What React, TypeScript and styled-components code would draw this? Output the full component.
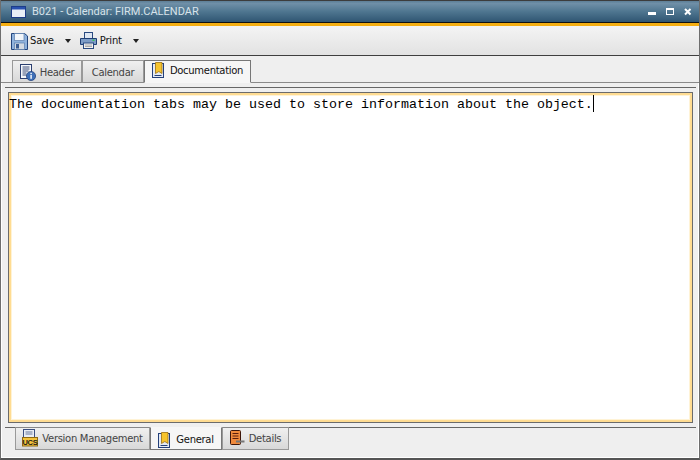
import React from "react";
import styled, { createGlobalStyle } from "styled-components";

const UI_FONT = `"DejaVu Sans", Verdana, sans-serif`;

const Global = createGlobalStyle`
  html, body { margin: 0; padding: 0; background: #ededed; }
  body { font-family: ${UI_FONT}; }
`;

const Frame = styled.div`
  width: 700px; height: 460px; box-sizing: border-box; overflow: hidden;
  display: flex; flex-direction: column; background: #efefef;
  border-left: 1px solid #6e6e6e; border-right: 1px solid #6e6e6e;
  border-bottom: 2px solid #555;
  box-shadow: inset 1px 0 0 #fff, inset -1px 0 0 #fff, inset 0 -1px 0 #fff;
`;
const TitleBar = styled.div`
  height: 22px; flex: none; display: flex; align-items: center; box-sizing: border-box;
  padding: 0 8px 0 11px; margin: 0 -1px;
  background: linear-gradient(#5d7f97 0%, #6f8fa7 12%, #4f7690 50%, #2f5572 100%);
  color: #d8e3ea; font-family: "Roboto", sans-serif; font-size: 11px; gap: 6px;
  border-top: 1px solid #3c3c3c;
`;
const TitleText = styled.span`flex: 1; white-space: nowrap;`;
const WinButtons = styled.div`display: flex; align-items: flex-start; gap: 10px; padding-top: 1px;`;
const Accent = styled.div`
  height: 4px; flex: none; margin: 0 -1px; background: #f4ae12; border-top: 1px solid #111; box-sizing: border-box;
`;
const Toolbar = styled.div`
  height: 30px; flex: none; box-sizing: border-box; display: flex; align-items: center;
  padding: 0 0 0 10px; background: linear-gradient(#f4f4f4, #e2e2e2);
  border-bottom: 1px solid #3f3f3f; font-size: 10px; letter-spacing: -0.2px; color: #111;
`;
const ToolButton = styled.div`display: flex; align-items: center; gap: 2px; margin-right: 9px;`;
const Caret = styled.span`
  width: 0; height: 0; margin-left: 9px; border-left: 3.5px solid transparent;
  border-right: 3.5px solid transparent; border-top: 4px solid #222;
`;
const TopTabs = styled.div`
  height: 27px; flex: none; display: flex; align-items: flex-end; padding: 0 0 0 11px;
  background: #efefef; font-size: 10px; letter-spacing: -0.3px; box-sizing: border-box;
  border-bottom: 1px solid #8a8a8a;
`;
const Tab = styled.div<{ $active?: boolean; $w: number }>`
  width: ${p => p.$w}px; box-sizing: border-box; display: flex; align-items: center; justify-content: center; gap: ${p => (p.$active ? 5 : 4)}px;
  height: ${p => (p.$active ? 23 : 22)}px;
  color: ${p => (p.$active ? "#111" : "#444")};
  background: ${p => (p.$active ? "#f6f6f6" : "linear-gradient(#f0f0f0, #d8d8d8)")};
  border: 1px solid ${p => (p.$active ? "#777" : "#999")};
  border-bottom: ${p => (p.$active ? "1px solid #f6f6f6" : "none")};
  margin-bottom: ${p => (p.$active ? -1 : 0)}px;
  padding-bottom: ${p => (p.$active ? 3 : 0)}px;
  padding-top: ${p => (p.$active ? 0 : 1)}px;
`;
const Panel = styled.div`
  flex: 1; min-height: 0; display: flex; margin: 4px 3px 0 4px; padding: 4px 3px;
  border-top: 1px solid #666; border-bottom: 1px solid #666;
`;
const Editor = styled.div`
  flex: 1; min-width: 0; background: #fff; box-sizing: border-box;
  border: 1px solid #6b6b6b; box-shadow: inset 0 0 0 2px #ffdc92, inset 0 0 0 3px #fff3d6;
  padding: 2px 0; overflow: hidden;
  font-family: "Liberation Mono", "Courier New", monospace; font-size: 13.333px; line-height: 16px; color: #000;
  white-space: pre;
`;
const CursorBar = styled.span`
  display: inline-block; width: 1px; height: 17px; background: #000; vertical-align: -4px;
`;
const BottomTabs = styled.div`
  height: 31px; flex: none; box-sizing: border-box; padding: 0 0 0 14px; margin-top: -1px;
  display: flex; align-items: flex-start; font-size: 10px; letter-spacing: -0.3px;
`;
const BottomTab = styled.div<{ $active?: boolean; $w: number }>`
  width: ${p => p.$w}px; box-sizing: border-box; display: flex; align-items: center; justify-content: center; gap: ${p => (p.$active ? 5 : 4)}px;
  height: 23px;
  color: ${p => (p.$active ? "#111" : "#444")};
  background: ${p => (p.$active ? "#f6f6f6" : "linear-gradient(#f0f0f0, #d8d8d8)")};
  border: 1px solid ${p => (p.$active ? "#777" : "#999")};
  border-top: ${p => (p.$active ? "1px solid #f6f6f6" : "1px solid #888")};
  padding-top: ${p => (p.$active ? 2 : 0)}px;
  padding-bottom: ${p => (p.$active ? 0 : 1)}px;
`;

const SaveIcon = () => (
  <svg width="17" height="18" viewBox="0 0 17 18">
    <path d="M.5 1.5h13L16.5 4v13.5H.5z" fill="#8fb2dc" stroke="#22447c" />
    <rect x="3.5" y="1.5" width="9.5" height="7" fill="#f2f6fa" stroke="#5a7cab" strokeWidth=".7" />
    <rect x="3.5" y="11" width="10" height="6.5" fill="#d3dae2" stroke="#5a7cab" strokeWidth=".7" />
    <rect x="5" y="12" width="3" height="4.5" fill="#3a5c92" />
  </svg>
);
const PrintIcon = () => (
  <svg width="18" height="17" viewBox="0 0 18 17">
    <rect x="4.5" y=".5" width="8" height="6" fill="#dfe7f2" stroke="#2a4a80" />
    <path d="M.5 6.5h16v6H.5z" fill="#7d9cc6" stroke="#1f3f74" />
    <rect x="12.5" y="7.5" width="2" height="1.5" fill="#39c45a" />
    <rect x="3.5" y="11" width="10" height="5.5" fill="#f1f1f1" stroke="#2a4a80" />
    <path d="M5 13h7M5 14.5h7" stroke="#8a8a8a" strokeWidth=".7" />
  </svg>
);
const HeaderIcon = () => (
  <svg width="16" height="17" viewBox="0 0 16 17">
    <rect x=".5" y=".5" width="11" height="14" fill="#f5f7fb" stroke="#2b3f70" />
    <path d="M2.5 3h7M2.5 5h7M2.5 7h6M2.5 9h4M2.5 11h4" stroke="#3f4f78" strokeWidth="1" />
    <circle cx="11" cy="12" r="4.6" fill="#3f70b8" stroke="#1d3c78" strokeWidth=".7" />
    <rect x="10.4" y="11" width="1.4" height="3.8" fill="#fff" />
    <rect x="10.4" y="8.8" width="1.4" height="1.4" fill="#fff" />
  </svg>
);
const DocIcon = () => (
  <svg width="13" height="16" viewBox="0 0 13 16">
    <rect x=".5" y="1.5" width="11" height="14" fill="#e4eaf3" stroke="#24407a" />
    <path d="M2.5 13.5h7" stroke="#24407a" strokeWidth="1" />
    <path d="M3.5 .5h6.5v11l-3.2-2-3.3 2z" fill="#f6c42d" stroke="#9a6f10" strokeWidth=".8" />
  </svg>
);
const UcsIcon = () => (
  <svg width="16" height="18" viewBox="0 0 16 18">
    <rect x="1.5" y="0.5" width="11" height="11" fill="#e9edf4" stroke="#3b4f80" />
    <path d="M3.5 3h7M3.5 5h7" stroke="#68789c" strokeWidth="1" />
    <rect x=".5" y="8.5" width="15" height="8.5" fill="#f4c33c" stroke="#8f6a12" />
    <text x="8" y="15.5" fontSize="7.5" fontWeight="700" fontFamily="Liberation Sans" textAnchor="middle" letterSpacing="-.2" fill="#1a1a1a">UCS</text>
  </svg>
);
const DetailsIcon = () => (
  <svg width="15" height="16" viewBox="0 0 15 16">
    <rect x=".5" y=".5" width="10" height="14" rx="1" fill="#f08a3c" stroke="#3c160a" />
    <path d="M2.5 3.5h6M2.5 6h6M2.5 8.5h6" stroke="#5c1d0c" strokeWidth="1" />
    <path d="M6 11.5h8.5" stroke="#777" strokeWidth="2" />
  </svg>
);
const AppIcon = () => (
  <svg width="15" height="12" viewBox="0 0 15 12">
    <rect x=".5" y=".5" width="14" height="11" fill="#e9eff6" stroke="#1c3c88" />
    <rect x="1" y="1" width="13" height="2.5" fill="#2a52b0" />
  </svg>
);
const MinIcon = () => (
  <svg width="8" height="8" viewBox="0 0 8 8"><rect y="4" width="8" height="3" fill="#fff" /></svg>
);
const MaxIcon = () => (
  <svg width="8" height="8" viewBox="0 0 8 8"><rect x=".5" y=".5" width="7" height="6" fill="none" stroke="#fff" /><rect width="8" height="2" fill="#fff" /></svg>
);
const CloseIcon = () => (
  <svg width="8" height="8" viewBox="0 0 8 8"><path d="M1 1l5.5 5.5M6.5 1L1 6.5" stroke="#fff" strokeWidth="2" /></svg>
);

export default function App() {
  return (
    <Frame>
      <Global />
      <TitleBar>
        <AppIcon />
        <TitleText>B021 - Calendar: FIRM.CALENDAR</TitleText>
        <WinButtons><MinIcon /><MaxIcon /><CloseIcon /></WinButtons>
      </TitleBar>
      <Accent />
      <Toolbar>
        <ToolButton><SaveIcon />Save<Caret /></ToolButton>
        <ToolButton><PrintIcon />Print<Caret /></ToolButton>
      </Toolbar>
      <TopTabs>
        <Tab $w={70}><HeaderIcon />Header</Tab>
        <Tab $w={62}>Calendar</Tab>
        <Tab $active $w={107}><DocIcon />Documentation</Tab>
      </TopTabs>
      <Panel>
        <Editor>The documentation tabs may be used to store information about the object.<CursorBar /></Editor>
      </Panel>
      <BottomTabs>
        <BottomTab $w={135}><UcsIcon />Version Management</BottomTab>
        <BottomTab $active $w={72}><DocIcon />General</BottomTab>
        <BottomTab $w={67}><DetailsIcon />Details</BottomTab>
      </BottomTabs>
    </Frame>
  );
}
